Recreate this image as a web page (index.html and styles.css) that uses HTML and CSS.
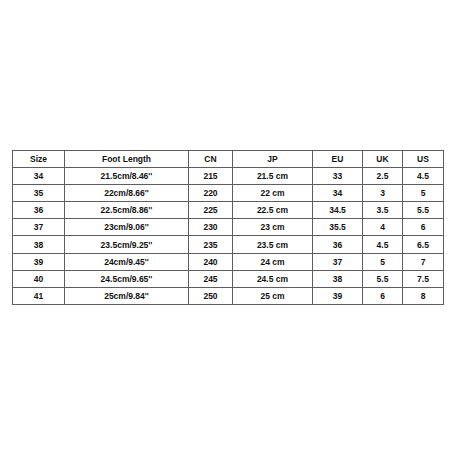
FILE: index.html
```html
<!DOCTYPE html>
<html>
<head>
<meta charset="utf-8">
<link rel="stylesheet" href="styles.css">
</head>
<body>
<div class="page">
<table class="size-table">
<colgroup>
<col class="c-size"><col class="c-foot"><col class="c-cn"><col class="c-jp"><col class="c-eu"><col class="c-uk"><col class="c-us">
</colgroup>
<thead>
<tr><th>Size</th><th>Foot Length</th><th>CN</th><th>JP</th><th>EU</th><th>UK</th><th>US</th></tr>
</thead>
<tbody>
<tr><td>34</td><td>21.5cm/8.46''</td><td>215</td><td>21.5 cm</td><td>33</td><td>2.5</td><td>4.5</td></tr>
<tr><td>35</td><td>22cm/8.66''</td><td>220</td><td>22 cm</td><td>34</td><td>3</td><td>5</td></tr>
<tr><td>36</td><td>22.5cm/8.86''</td><td>225</td><td>22.5 cm</td><td>34.5</td><td>3.5</td><td>5.5</td></tr>
<tr><td>37</td><td>23cm/9.06''</td><td>230</td><td>23 cm</td><td>35.5</td><td>4</td><td>6</td></tr>
<tr><td>38</td><td>23.5cm/9.25''</td><td>235</td><td>23.5 cm</td><td>36</td><td>4.5</td><td>6.5</td></tr>
<tr><td>39</td><td>24cm/9.45''</td><td>240</td><td>24 cm</td><td>37</td><td>5</td><td>7</td></tr>
<tr><td>40</td><td>24.5cm/9.65''</td><td>245</td><td>24.5 cm</td><td>38</td><td>5.5</td><td>7.5</td></tr>
<tr><td>41</td><td>25cm/9.84''</td><td>250</td><td>25 cm</td><td>39</td><td>6</td><td>8</td></tr>
</tbody>
</table>
</div>
</body>
</html>
```
FILE: styles.css
```css
html, body {
  margin: 0;
  padding: 0;
  background: #ffffff;
}
.page {
  width: 450px;
  height: 450px;
  padding: 150px 0 0 12px;
  box-sizing: border-box;
}
.size-table {
  border-collapse: collapse;
  table-layout: fixed;
  width: 432px;
  font-family: "Liberation Sans", Arial, sans-serif;
  font-size: 8.5px;
  font-weight: bold;
  color: #111111;
}
.size-table th,
.size-table td {
  border: 1px solid #5e5e5e;
  height: 16.1px;
  padding: 0;
  text-align: center;
  vertical-align: middle;
  font-weight: bold;
  line-height: 16px;
  white-space: nowrap;
}
.c-size { width: 52px; }
.c-foot { width: 124px; }
.c-cn { width: 44px; }
.c-jp { width: 80px; }
.c-eu { width: 50px; }
.c-uk { width: 40px; }
.c-us { width: 41px; }
```
